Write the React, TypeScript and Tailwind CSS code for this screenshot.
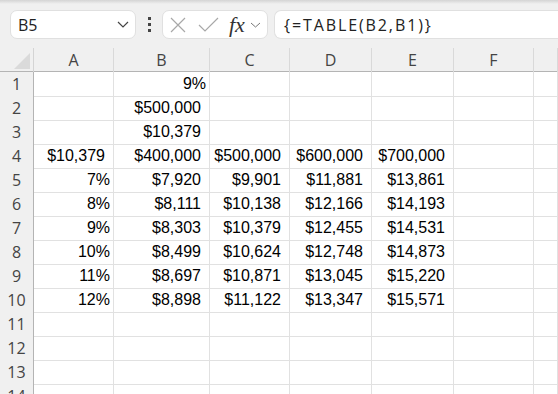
import React from "react";

const cols = ["A", "B", "C", "D", "E", "F", ""];

const rows: (string | null)[][] = [
  [null, "9%", null, null, null],
  [null, "$500,000", null, null, null],
  [null, "$10,379", null, null, null],
  ["$10,379", "$400,000", "$500,000", "$600,000", "$700,000"],
  ["7%", "$7,920", "$9,901", "$11,881", "$13,861"],
  ["8%", "$8,111", "$10,138", "$12,166", "$14,193"],
  ["9%", "$8,303", "$10,379", "$12,455", "$14,531"],
  ["10%", "$8,499", "$10,624", "$12,748", "$14,873"],
  ["11%", "$8,697", "$10,871", "$13,045", "$15,220"],
  ["12%", "$8,898", "$11,122", "$13,347", "$15,571"],
  [null, null, null, null, null],
  [null, null, null, null, null],
  [null, null, null, null, null],
  [null, null, null, null, null],
];

const gridCols = "grid grid-cols-[34px_80px_96px_80px_82px_82px_80px_1fr]";

function Toolbar() {
  return (
    <div className="relative h-[48px] bg-[#f0f0f0] flex items-start pt-[10px] pl-[10px]">
      {/* top shadow */}
      <div className="absolute top-0 left-0 right-0 h-[4px] bg-gradient-to-b from-[#d4d4d4] to-[#f0f0f0]" />

      {/* name box */}
      <div className="w-[126px] h-[29px] bg-white border border-[#e0e0e0] rounded-[7px] flex items-center justify-between pl-[7px] pr-[6px]">
        <span className="text-[16px] text-[#222] font-['Open_Sans',sans-serif]">B5</span>
        <svg width="12" height="7" viewBox="0 0 12 7" fill="none">
          <path d="M1 1l5 5 5-5" stroke="#444" strokeWidth="1.2" />
        </svg>
      </div>

      {/* dots */}
      <div className="w-[26px] h-[29px] flex flex-col items-center justify-center gap-[3px]">
        <div className="w-[3px] h-[3px] bg-[#444]" />
        <div className="w-[3px] h-[3px] bg-[#444]" />
        <div className="w-[3px] h-[3px] bg-[#444]" />
      </div>

      {/* formula buttons */}
      <div className="w-[106px] h-[29px] bg-white border border-[#e0e0e0] rounded-[7px] flex items-center pl-[7px]">
        <svg width="16" height="16" viewBox="0 0 16 16" fill="none">
          <path d="M1 1l14 14M15 1L1 15" stroke="#a8a8a8" strokeWidth="1.2" />
        </svg>
        <svg width="21" height="16" viewBox="0 0 21 16" fill="none" className="ml-[12px]">
          <path d="M1 8l6 6L20 1" stroke="#a8a8a8" strokeWidth="1.2" />
        </svg>
        <span className="ml-[10px] text-[22px] leading-none italic text-[#333] font-['Liberation_Serif',serif]">
          fx
        </span>
        <svg width="11" height="6" viewBox="0 0 11 6" fill="none" className="ml-[5px]">
          <path d="M1 1l4.5 4 4.5-4" stroke="#777" strokeWidth="1" />
        </svg>
      </div>

      {/* formula input */}
      <div className="ml-[6px] flex-1 h-[29px] bg-white border border-[#e0e0e0] border-r-0 rounded-l-[7px] flex items-center pl-[9px]">
        <span className="text-[16px] tracking-[1.9px] text-[#222] font-['Open_Sans',sans-serif]">
          {"{=TABLE(B2,B1)}"}
        </span>
      </div>
    </div>
  );
}

function Header() {
  return (
    <div className={`${gridCols} h-[24px] bg-[#f0f0f0] border-b border-[#b4b4b4]`}>
      <div className="relative border-r border-[#d4d4d4]">
        <svg width="16" height="16" viewBox="0 0 16 16" className="absolute right-[3px] bottom-[3px]">
          <path d="M16 0L16 16L0 16Z" fill="#dadada" />
        </svg>
      </div>
      {cols.map((c, i) => (
        <div
          key={i}
          className="flex items-center justify-center border-r border-[#d9d9d9] text-[16px] text-[#444] font-['Open_Sans',sans-serif]"
        >
          {c}
        </div>
      ))}
    </div>
  );
}

export default function App() {
  return (
    <div className="w-[558px] h-[394px] overflow-hidden bg-white">
      <Toolbar />
      <Header />
      {rows.map((r, ri) => (
        <div key={ri} className={`${gridCols} h-[24px]`}>
          <div className="flex items-center justify-center bg-[#f0f0f0] border-r border-[#b4b4b4] border-b border-b-[#dcdcdc] text-[16px] text-[#444] font-['Open_Sans',sans-serif]">
            {ri + 1}
          </div>
          {[0, 1, 2, 3, 4, 5, 6].map((ci) => {
            const v = ci < 5 ? r[ci] : null;
            const pct = v ? v.endsWith("%") : false;
            return (
              <div
                key={ci}
                className={`flex items-center justify-end border-r border-b border-[#e1e1e1] text-[16px] text-black font-['Liberation_Sans',Arial,sans-serif] ${
                  pct ? "pr-[3px]" : "pr-[8px]"
                }`}
              >
                {v}
              </div>
            );
          })}
        </div>
      ))}
    </div>
  );
}
